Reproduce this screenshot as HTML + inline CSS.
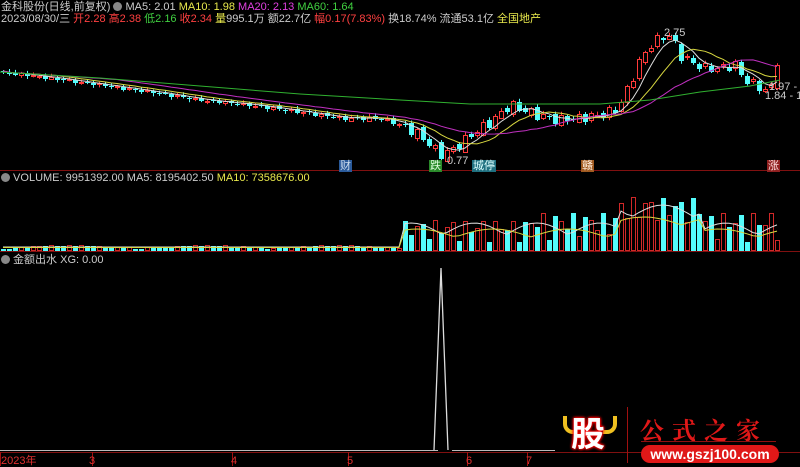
<!DOCTYPE html>
<html><head><meta charset="utf-8"><style>
body{margin:0;background:#000;width:800px;height:466px;overflow:hidden;font-family:"Liberation Sans","Noto Sans CJK SC",sans-serif;}
svg{position:absolute;left:0;top:0}
.t{position:absolute;font-size:11px;white-space:nowrap;line-height:12px;color:#ccc}
</style></head><body>
<svg id="s" width="800" height="466" xmlns="http://www.w3.org/2000/svg"></svg>
<div class="t" style="left:1px;top:1px"><span>金科股份(日线,前复权)</span> <span style="display:inline-block;width:9px;height:9px;border-radius:50%;background:#888;vertical-align:-1px"></span> <span>MA5: 2.01</span> <span style="color:#e8e84c">MA10: 1.98</span> <span style="color:#e040e0">MA20: 2.13</span> <span style="color:#40d040">MA60: 1.64</span></div>
<div class="t" style="left:1px;top:13px">2023/08/30/三 <span style="color:#ff4040">开2.28</span> <span style="color:#ff4040">高2.38</span> <span style="color:#40d040">低2.16</span> <span style="color:#ff4040">收2.34</span> <span style="color:#e8e84c">量</span>995.1万 额22.7亿 <span style="color:#ff4040">幅0.17(7.83%)</span> 换18.74% 流通53.1亿 <span style="color:#e8e84c">全国地产</span></div>
<div class="t" style="left:1px;top:172px"><span style="display:inline-block;width:9px;height:9px;border-radius:50%;background:#888;vertical-align:-1px"></span> VOLUME: 9951392.00 MA5: 8195402.50 <span style="color:#e8e84c">MA10: 7358676.00</span></div>
<div class="t" style="left:1px;top:254px"><span style="display:inline-block;width:9px;height:9px;border-radius:50%;background:#888;vertical-align:-1px"></span> 金额出水 XG: 0.00</div>
<div class="t" style="left:1px;top:455px;color:#e03030">2023年</div>
<div class="t" style="left:89px;top:455px;color:#e03030">3</div>
<div class="t" style="left:231px;top:455px;color:#e03030">4</div>
<div class="t" style="left:347px;top:455px;color:#e03030">5</div>
<div class="t" style="left:466px;top:455px;color:#e03030">6</div>
<div class="t" style="left:526px;top:455px;color:#e03030">7</div>
<div class="t" style="left:664px;top:27px">2.75</div>
<div class="t" style="left:447px;top:155px">0.77</div>
<div class="t" style="left:769px;top:81px">1.97 - 2</div>
<div class="t" style="left:765px;top:90px">1.84 - 1.8</div>
<div class="t" style="left:339px;top:160px;background:#2a5a9a;color:#cde;padding:0 1px">财</div>
<div class="t" style="left:429px;top:160px;background:#2a8a2a;color:#dfd;padding:0 1px">跌</div>
<div class="t" style="left:472px;top:160px;background:#207080;color:#dff;padding:0 1px">城停</div>
<div class="t" style="left:581px;top:160px;background:#a05a20;color:#fed;padding:0 1px">赣</div>
<div class="t" style="left:767px;top:160px;background:#902020;color:#fdd;padding:0 1px">涨</div>
<div style="position:absolute;left:563px;top:416px;width:10px;height:14px;border-left:4px solid #f0c020;border-bottom:4px solid #f0c020;border-radius:0 0 0 10px"></div>
<div style="position:absolute;left:603px;top:416px;width:10px;height:14px;border-right:4px solid #f0c020;border-bottom:4px solid #f0c020;border-radius:0 0 10px 0"></div>
<div style="position:absolute;left:560px;top:412px;width:56px;height:40px;color:#fff;font:bold 34px 'Noto Sans CJK SC',sans-serif;text-shadow:0 0 3px #f00,0 0 3px #f00,0 0 2px #f00;line-height:40px;text-align:center">股</div>
<div style="position:absolute;left:627px;top:407px;width:1px;height:56px;background:#a01010"></div>
<div style="position:absolute;left:640px;top:411px;color:#e01818;font:bold 24px 'Noto Serif CJK SC',serif;letter-spacing:8px">公式之家</div>
<div style="position:absolute;left:641px;top:441px;width:135px;height:1px;background:#901010"></div>
<div style="position:absolute;left:641px;top:445px;width:138px;height:18px;border-radius:9px;background:#e01818;color:#fff;font:bold 14px 'Liberation Sans',sans-serif;text-align:center;line-height:18px">www.gszj100.com</div>
<script>
const s=document.getElementById('s');let h='';
function L(x1,y1,x2,y2,c){h+=`<line x1="${x1}" y1="${y1}" x2="${x2}" y2="${y2}" stroke="${c}" stroke-width="1"/>`;}
L(0,170.5,800,170.5,'#801010');L(0,251.5,800,251.5,'#801010');L(0,452.5,800,452.5,'#801010');
[0,92,232,348,467,527].forEach(x=>L(x+.5,452,x+.5,466,'#a01010'));
const K=[[0,72],[50,78],[100,85],[150,92],[200,100],[250,105],[300,112],[340,118],[380,118],[400,125],[420,135],[440,155],[455,148],[470,135],[490,122],[510,105],[530,112],[555,120],[580,118],[600,115],[615,110],[625,95],[640,60],[650,45],[660,38],[670,35],[680,55],[690,62],[705,68],[720,68],[735,65],[745,80],[760,88],[770,92],[778,55]];
function ip(x){for(let i=1;i<K.length;i++)if(x<=K[i][0]){let a=K[i-1],b=K[i];return a[1]+(b[1]-a[1])*(x-a[0])/(b[0]-a[0]);}return 55;}
let C=[],X=[];for(let x=3;x<=778;x+=6){X.push(x);C.push(ip(x)+Math.sin(x*1.7)*(x>400?5:1.5));}
let O=[C[0]];for(let i=1;i<C.length;i++)O.push(C[i-1]+Math.sin(i*2.3)*(X[i]>400?3:1));
for(let i=0;i<C.length;i++){let x=X[i],o=O[i],c=C[i],up=c<o,top=Math.min(o,c)-1-Math.abs(Math.sin(i))*2,bot=Math.max(o,c)+1+Math.abs(Math.cos(i))*2;
let col=up?'#ff3a3a':'#54fcfc';L(x+.5,top,x+.5,bot,col);
let bh=Math.max(1,Math.abs(o-c));let yt=Math.round(Math.min(o,c));
h+=up?`<rect x="${x-1.5}" y="${yt+.5}" width="4" height="${Math.round(bh)}" fill="#000" stroke="${col}"/>`:`<rect x="${x-2}" y="${yt}" width="5" height="${Math.round(bh)}" fill="${col}"/>`;
let v=x<405?2+Math.abs(Math.sin(i*3))*3:8+Math.abs(Math.sin(i*1.9))*(x>530?30:22)+(x>620&&x<700?15:0);v=Math.round(v);
h+=up?`<rect x="${x-1.5}" y="${250.5-v}" width="4" height="${v}" fill="none" stroke="#d02828"/>`:`<rect x="${x-2}" y="${251-v}" width="5" height="${v}" fill="#54fcfc"/>`;}
function ma(n,off){let p=[];for(let i=0;i<C.length;i++){let a=0,k=0;for(let j=Math.max(0,i-n+1);j<=i;j++){a+=C[j];k++;}p.push(X[i]+','+(a/k+off).toFixed(1));}return p.join(' ');}
h+=`<polyline points="${ma(5,0)}" fill="none" stroke="#ddd"/>`;
h+=`<polyline points="${ma(10,0)}" fill="none" stroke="#d8d840"/>`;
h+=`<polyline points="${ma(20,0)}" fill="none" stroke="#c030c0"/>`;
h+=`<polyline points="0,72 100,78 200,86 300,94 400,100 470,104 530,104 600,104 650,100 700,92 750,86 780,80" fill="none" stroke="#30b030"/>`;
h+=`<polyline points="${X.map((x,i)=>x+','+(x<405?247:235-Math.abs(Math.sin(i*0.3))*12-(x>620&&x<700?18:0)).toFixed(1)).join(' ')}" fill="none" stroke="#ddd"/>`;
h+=`<polyline points="${X.map((x,i)=>x+','+(x<405?247.5:237-Math.abs(Math.sin(i*0.25))*8-(x>620&&x<700?12:0)).toFixed(1)).join(' ')}" fill="none" stroke="#d8d840"/>`;
L(0,450.5,438,450.5,'#bbb');L(452,450.5,555,450.5,'#bbb');
h+=`<polyline points="434,450 441,268 448,450" fill="none" stroke="#ddd" stroke-width="1.3"/>`;
s.innerHTML=h;
</script>
</body></html>
